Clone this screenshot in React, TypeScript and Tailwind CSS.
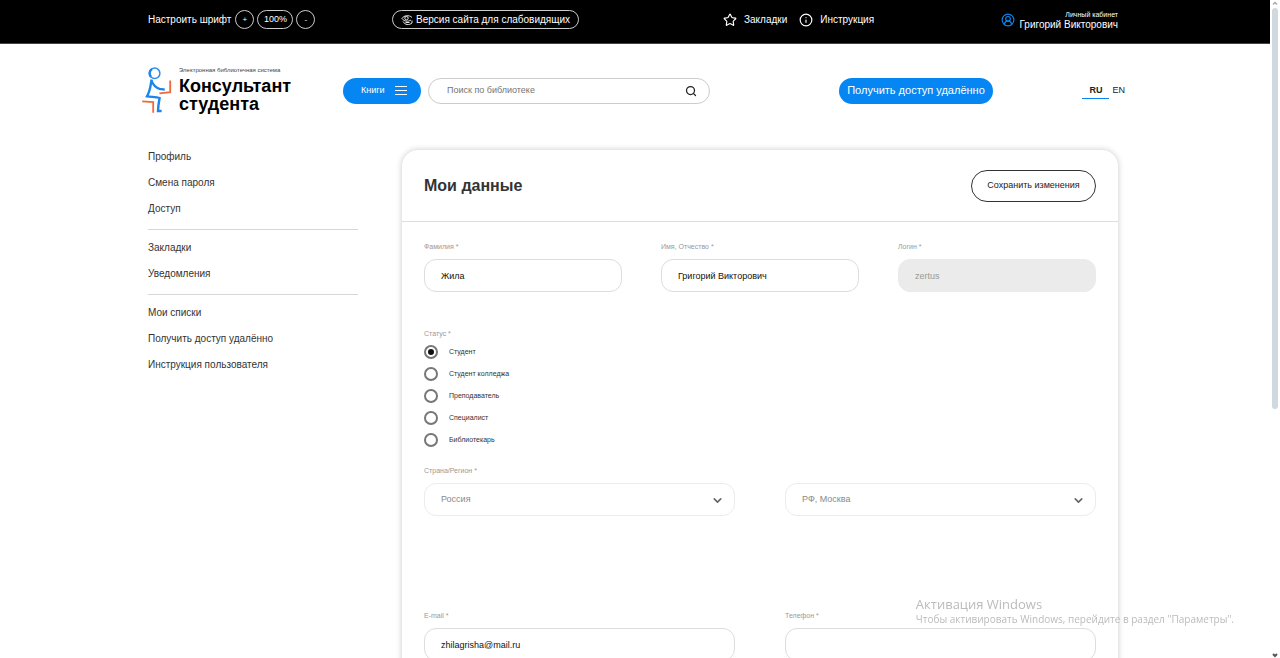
import { useState } from 'react';
import { ChevronDown, CircleUserRound, Info, Search, Star } from 'lucide-react';

const menuGroups = [
  ['Профиль', 'Смена пароля', 'Доступ'],
  ['Закладки', 'Уведомления'],
  ['Мои списки', 'Получить доступ удалённо', 'Инструкция пользователя'],
];

const statuses = ['Студент', 'Студент колледжа', 'Преподаватель', 'Специалист', 'Библиотекарь'];

function Logo() {
  return (
    <a href="#" className="flex items-start gap-[7px]">
      <svg viewBox="0 0 30 47" className="h-[47px] w-[30px] shrink-0" fill="none">
        <circle cx="12.7" cy="6.3" r="5.2" stroke="#2b8fe8" strokeWidth="1.5" />
        <path d="M10 1.900a5.200 5.200 0 0 0-1 8" stroke="#1c86e8" strokeWidth="2.400" />
        <path
          d="M9.600 12.500C8.600 18 8.400 23.500 5 29.400c4.400.8 9.200.2 12.600 1.600-.8 4.200-1.400 8-1.600 13h3.600"
          stroke="#1c86e8"
          strokeWidth="2.400"
        />
        <path d="M9.400 13.500c1.800 4.600 4.800 7.400 8.200 8.400l5.200.8" stroke="#1c86e8" strokeWidth="2.200" />
        <path d="M28.200 13.500v11.600l-10.800 1.200" stroke="#f0693a" strokeWidth="1.800" />
        <path d="M.2 34.400l11 .6v10.800" stroke="#f0693a" strokeWidth="1.800" />
      </svg>
      <span className="block">
        <span className="block h-[10px] text-[6px] leading-[6px] text-[#444]">
          Электронная библиотечная система
        </span>
        <span className="block text-[18px] leading-[18px] font-bold text-black">
          Консультант
          <br />
          студента
        </span>
      </span>
    </a>
  );
}

function EyeIcon() {
  return (
    <svg viewBox="0 0 12 12" className="size-3" fill="none" stroke="white" strokeWidth="0.9">
      <path d="M1 4.500C2.500 1.500 8 .5 11 3.500M1 4.500c2 3 6 3.500 9 1.500" />
      <circle cx="5.500" cy="4.200" r="1.700" />
      <path d="M2 7.500c2 3.500 6 4 9 1.500V6.500M4.500 8.500h4" />
    </svg>
  );
}

function TopBar() {
  return (
    <div className="border-b border-[#444] bg-black text-white">
      <div className="mx-auto grid h-[43px] max-w-[974px] grid-cols-[244px_331px_1fr_auto] items-center pr-1 pb-1 text-[10px]">
        <div className="flex items-center gap-[3px]">
          <span className="pr-px">Настроить шрифт</span>
          <button className="size-[19px] rounded-full border border-[#ccc] text-[8px] leading-none">+</button>
          <button className="h-[19px] w-9 rounded-full border border-[#ccc] text-[9px] leading-none">100%</button>
          <button className="size-[19px] rounded-full border border-[#ccc] text-[8px] leading-none">-</button>
        </div>
        <div>
          <button className="flex h-[19px] items-center gap-[3px] rounded-full border border-[#ccc] px-2 leading-none">
            <EyeIcon />
            Версия сайта для слабовидящих
          </button>
        </div>
        <div className="flex items-center gap-3">
          <a href="#" className="flex items-center gap-[7px]">
            <Star className="size-[14px]" strokeWidth={2} />
            Закладки
          </a>
          <a href="#" className="flex items-center gap-[7px]">
            <Info className="size-[14px]" strokeWidth={2} />
            Инструкция
          </a>
        </div>
        <a href="#" className="flex items-center gap-1">
          <CircleUserRound className="size-[14px] text-[#0a84f0]" strokeWidth={2} />
          <span className="text-right leading-[10px]">
            <span className="block text-[7px] leading-[10px]">Личный кабинет</span>
            Григорий Викторович
          </span>
        </a>
      </div>
    </div>
  );
}

function SiteHeader() {
  return (
    <header className="mx-auto grid h-[100px] max-w-[986px] grid-cols-[201px_496px_1fr_auto] items-center pr-[3px] pb-[7px]">
      <Logo />
      <div className="flex gap-[7px]">
        <button className="flex h-[26px] w-[78px] items-center gap-[10px] rounded-full bg-[#0586f2] pl-[18px] text-[9px] text-white">
          Книги
          <svg viewBox="0 0 12 9" className="h-[9px] w-3" stroke="currentColor">
            <path d="M0 .5h12M0 4.500h12M0 8.500h12" />
          </svg>
        </button>
        <div className="flex h-[26px] w-[282px] items-center rounded-full border border-[#ccc] pr-3 pl-[18px]">
          <input
            aria-label="Поиск по библиотеке"
            placeholder="Поиск по библиотеке"
            className="min-w-0 flex-1 text-[9px] outline-none placeholder:text-[#757575]"
          />
          <button aria-label="Найти">
            <Search className="size-3 text-[#222]" strokeWidth={2.5} />
          </button>
        </div>
      </div>
      <div>
        <button className="h-[26px] w-[154px] rounded-full bg-[#0586f2] text-[11px] leading-none whitespace-nowrap text-white">
          Получить доступ удалённо
        </button>
      </div>
      <nav className="flex gap-[3px] text-[9px] leading-4 text-[#222]">
        <a href="#" className="border-b border-[#0586f2] px-[7px] font-bold">
          RU
        </a>
        <a href="#">EN</a>
      </nav>
    </header>
  );
}

function SideMenu() {
  return (
    <nav className="-mt-[7px] w-[210px] shrink-0 text-[10px] text-[#333]">
      {menuGroups.map((group) => (
        <ul key={group[0]} className="mb-1 border-b border-[#d8d8d8] pt-px pb-[7px] last:border-0">
          {group.map((item) => (
            <li key={item}>
              <a href="#" className="block leading-[26px]">
                {item}
              </a>
            </li>
          ))}
        </ul>
      ))}
    </nav>
  );
}

const labelClass = 'block text-[7px] leading-[10px] text-[#999]';
const fieldClass = 'mt-[7px] h-[33px] w-full rounded-xl border px-4 text-[9px]';

interface FieldProps {
  id: string;
  label: string;
  value?: string;
  disabled?: boolean;
}

function Field({ id, label, value = '', disabled }: FieldProps) {
  return (
    <div>
      <label htmlFor={id} className={labelClass}>
        {label}
      </label>
      <input
        id={id}
        defaultValue={value}
        disabled={disabled}
        className={`${fieldClass} ${disabled ? 'border-[#ebebeb] bg-[#ebebeb] text-[#999]' : 'border-[#ddd] text-[#111]'}`}
      />
    </div>
  );
}

interface SelectBoxProps {
  id: string;
  name: string;
  option: string;
}

function SelectBox({ id, name, option }: SelectBoxProps) {
  return (
    <div className="relative">
      <select
        id={id}
        aria-label={name}
        className={`${fieldClass} appearance-none border-[#ececec] text-[#8a8a8a]`}
      >
        <option>{option}</option>
      </select>
      <ChevronDown
        className="pointer-events-none absolute right-[11px] bottom-[9px] size-[13px] text-[#666]"
        strokeWidth={3}
      />
    </div>
  );
}

function ProfileCard() {
  const [status, setStatus] = useState(statuses[0]);

  return (
    <form className="min-w-0 flex-1 rounded-2xl bg-white shadow-[0_0_6px_rgba(0,0,0,0.22)]">
      <div className="flex h-[72px] items-center justify-between border-b border-[#ddd] px-[22px]">
        <h1 className="text-[16px] font-bold text-[#333]">Мои данные</h1>
        <button
          type="button"
          className="h-8 w-[125px] rounded-full border border-[#333] text-[9px] whitespace-nowrap text-[#222]"
        >
          Сохранить изменения
        </button>
      </div>
      <div className="px-[22px] pt-5 pb-10">
        <div className="grid grid-cols-3 gap-[39px]">
          <Field id="surname" label="Фамилия *" value="Жила" />
          <Field id="name" label="Имя, Отчество *" value="Григорий Викторович" />
          <Field id="login" label="Логин *" value="zertus" disabled />
        </div>
        <fieldset className="mt-[37px]">
          <legend className={`${labelClass} mb-[2px]`}>Статус *</legend>
          {statuses.map((item) => (
            <label key={item} className="flex h-[22px] items-center gap-[11px] text-[7px] text-[#333]">
              <input
                type="radio"
                name="status"
                checked={status === item}
                onChange={() => setStatus(item)}
                className="grid size-[14px] appearance-none place-items-center rounded-full border-2 border-[#777] before:size-[6px] before:rounded-full checked:before:bg-[#111]"
              />
              {item}
            </label>
          ))}
        </fieldset>
        <div className="mt-[15px]">
          <label htmlFor="country" className={labelClass}>
            Страна/Регион *
          </label>
          <div className="grid grid-cols-2 gap-[50px]">
            <SelectBox id="country" name="Страна" option="Россия" />
            <SelectBox id="region" name="Регион" option="РФ, Москва" />
          </div>
        </div>
        <div className="mt-[95px] grid grid-cols-2 gap-[50px]">
          <Field id="email" label="E-mail *" value="zhilagrisha@mail.ru" />
          <Field id="phone" label="Телефон *" />
        </div>
      </div>
    </form>
  );
}

function ScrollTrack() {
  return (
    <div aria-hidden="true" className="flex w-[10px] shrink-0 flex-col items-center">
      <svg viewBox="0 0 6 8" className="h-2 w-[6px]" fill="none" stroke="#aaa" strokeWidth="1.5">
        <path d="M1 4.500l2-2 2 2" />
      </svg>
      <div className="h-[61%] w-[6px] rounded-sm bg-[#d0d9e0]" />
      <svg viewBox="0 0 6 8" className="mt-auto h-2 w-[6px]" fill="none" stroke="#555" strokeWidth="2">
        <path d="M1 4l2 2 2-2" />
      </svg>
    </div>
  );
}

function ActivationNotice() {
  return (
    <div className="pointer-events-none fixed right-[46px] bottom-8 font-['Open_Sans',sans-serif] text-[#bbb]">
      <p className="text-[13px] leading-4">Активация Windows</p>
      <p className="text-[10px] leading-[14px]">Чтобы активировать Windows, перейдите в раздел "Параметры".</p>
    </div>
  );
}

export default function App() {
  return (
    <div className="flex h-screen overflow-hidden bg-white font-['Liberation_Sans',Arial,sans-serif]">
      <div className="min-w-0 flex-1">
        <TopBar />
        <SiteHeader />
        <main className="mx-auto flex max-w-[974px] items-start gap-11 pt-[6px] pr-1">
          <SideMenu />
          <ProfileCard />
        </main>
      </div>
      <ScrollTrack />
      <ActivationNotice />
    </div>
  );
}
